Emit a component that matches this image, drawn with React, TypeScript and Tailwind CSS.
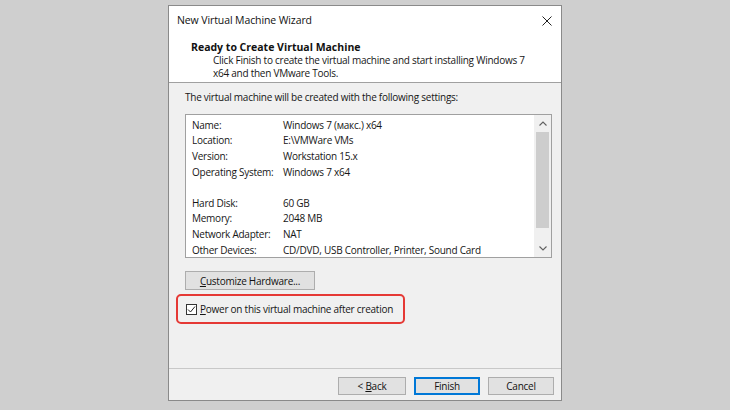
import React, { useState } from 'react';

const settings: [string, string][] = [
    ['Name:', 'Windows 7 (макс.) x64'],
    ['Location:', 'E:\\VMWare VMs'],
    ['Version:', 'Workstation 15.x'],
    ['Operating System:', 'Windows 7 x64'],
    ['', ''],
    ['Hard Disk:', '60 GB'],
    ['Memory:', '2048 MB'],
    ['Network Adapter:', 'NAT'],
    ['Other Devices:', 'CD/DVD, USB Controller, Printer, Sound Card'],
];

function Chevron({ up }: { up?: boolean }) {
    return (
        <svg width="8" height="5" viewBox="0 0 8 5" className="block">
            <polyline
                points={up ? '0.5,4.5 4,1 7.5,4.5' : '0.5,0.5 4,4 7.5,0.5'}
                fill="none"
                stroke="#606060"
                strokeWidth="1.1"
            />
        </svg>
    );
}

function WinButton({ children, primary, className = '' }: { children: React.ReactNode; primary?: boolean; className?: string }) {
    return (
        <button
            type="button"
            className={`h-[18px] bg-[#e1e1e1] text-[#111] flex items-center justify-center leading-none ${
                primary ? 'border-2 border-[#0078d7]' : 'border border-[#adadad]'
            } ${className}`}
        >
            {children}
        </button>
    );
}

export default function App() {
    const [powerOn, setPowerOn] = useState(true);

    return (
        <div
            className="w-[730px] h-[410px] bg-[#cfcfcf] pt-[5px] pl-[168px] text-[10px] tracking-[-0.25px] text-[#161616]"
            style={{ fontFamily: '"Open Sans", "Noto Sans", sans-serif' }}
        >
            <div className="w-[394px] h-[396px] border border-[#8a8a8a] bg-[#f0f0f0] flex flex-col">
                {/* title bar */}
                <div className="h-[29px] bg-white flex items-center justify-between pl-[8px] pr-[9px] shrink-0">
                    <span className="text-[10.5px] tracking-[-0.1px] text-[#111]">New Virtual Machine Wizard</span>
                    <svg width="10" height="10" viewBox="0 0 10 10">
                        <path d="M0.5 0.5 L9.5 9.5 M9.5 0.5 L0.5 9.5" stroke="#222" strokeWidth="1" />
                    </svg>
                </div>

                {/* header */}
                <div className="bg-white border-b border-[#a0a0a0] pl-[22px] pt-[5px] pb-[2px] shrink-0">
                    <div className="font-bold text-[10.5px] tracking-normal text-[#111] leading-[14px]">
                        Ready to Create Virtual Machine
                    </div>
                    <div className="pl-[22px] leading-[13px]">
                        Click Finish to create the virtual machine and start installing Windows 7
                        <br />
                        x64 and then VMware Tools.
                    </div>
                </div>

                {/* body */}
                <div className="flex-1 pl-[16px] pr-[9px] pt-[7px]">
                    <div className="leading-[14px]">The virtual machine will be created with the following settings:</div>

                    <div className="mt-[10px] h-[144px] border border-[#a0a0a0] bg-white flex">
                        <div className="flex-1 pl-[6px] pt-[2.5px]">
                            {settings.map(([label, value], i) => (
                                <div key={i} className="flex h-[15.6px] items-center">
                                    <span className="w-[91px] shrink-0">{label}</span>
                                    <span className="whitespace-nowrap">{value}</span>
                                </div>
                            ))}
                        </div>
                        <div className="w-[17px] bg-[#f0f0f0] flex flex-col items-center">
                            <div className="h-[17px] flex items-center justify-center">
                                <Chevron up />
                            </div>
                            <div className="w-[13px] h-[96px] bg-[#cdcdcd]" />
                            <div className="flex-1" />
                            <div className="h-[17px] flex items-center justify-center">
                                <Chevron />
                            </div>
                        </div>
                    </div>

                    <WinButton className="mt-[13px] w-[130px] h-[19px]">
                        <span>
                            <span className="underline">C</span>ustomize Hardware...
                        </span>
                    </WinButton>

                    <div className="mt-[4px] -ml-[9px] w-[229px] h-[30px] border-2 border-[#e53935] rounded-[5px] flex items-center pl-[8px]">
                        <label className="flex items-center gap-[3px] cursor-default whitespace-nowrap">
                            <span
                                onClick={() => setPowerOn(!powerOn)}
                                className="w-[11px] h-[11px] shrink-0 border border-[#333] bg-white flex items-center justify-center"
                            >
                                {powerOn && (
                                    <svg width="9" height="9" viewBox="0 0 9 9">
                                        <polyline points="1,4.5 3.5,7 8,1.5" fill="none" stroke="#222" strokeWidth="1" />
                                    </svg>
                                )}
                            </span>
                            <span>
                                <span className="underline">P</span>ower on this virtual machine after creation
                            </span>
                        </label>
                    </div>
                </div>

                {/* footer */}
                <div className="border-t border-[#c8c8c8] h-[32px] flex items-start justify-end gap-[8px] pr-[7px] pt-[8px] shrink-0">
                    <WinButton className="w-[68px]">
                        <span>
                            &lt; <span className="underline">B</span>ack
                        </span>
                    </WinButton>
                    <WinButton primary className="w-[66px]">
                        Finish
                    </WinButton>
                    <WinButton className="w-[66px]">Cancel</WinButton>
                </div>
            </div>
        </div>
    );
}
